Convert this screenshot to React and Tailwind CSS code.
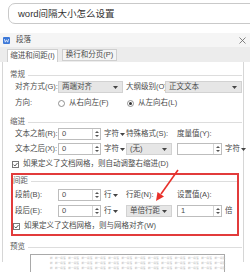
import React from "react";

function Caret() {
  return (
    <svg width="5" height="3" viewBox="0 0 5 3" className="shrink-0">
      <path d="M0 0h5L2.5 3z" fill="#444" />
    </svg>
  );
}

function Spin({ value = "", w }) {
  return (
    <div className={`flex h-[12px] shrink-0 items-stretch border border-[#bdbdbd] bg-white ${w}`}>
      <span className="flex flex-1 items-center pl-[3px]">{value}</span>
      <div className="flex w-[8px] flex-col items-center justify-center gap-[2px] border-l border-[#d6d6d6]">
        <svg width="4" height="2" viewBox="0 0 4 2">
          <path d="M0 2h4L2 0z" fill="#555" />
        </svg>
        <svg width="4" height="2" viewBox="0 0 4 2">
          <path d="M0 0h4L2 2z" fill="#555" />
        </svg>
      </div>
    </div>
  );
}

function Select({ value, w }) {
  return (
    <div className={`flex h-[12px] shrink-0 items-center justify-between border border-[#d2d2d2] bg-[#e6e6e6] pl-[3px] pr-[4px] ${w}`}>
      <span>{value}</span>
      <Caret />
    </div>
  );
}

function Unit({ text, caret = true }) {
  return (
    <div className="flex w-[25px] shrink-0 items-center gap-[1px] pl-[3px]">
      <span>{text}</span>
      {caret && <Caret />}
    </div>
  );
}

function Section({ title }) {
  return (
    <div className="flex h-[10px] items-center gap-[3px]">
      <span className="text-[#5a5a5a]">{title}</span>
      <div className="h-px flex-1 bg-[#dddddd]" />
    </div>
  );
}

function Check({ text }) {
  return (
    <div className="flex h-[10px] items-center gap-[4px] pl-[2px]">
      <svg width="7" height="7" viewBox="0 0 7 7">
        <rect x="0.5" y="0.5" width="6" height="6" fill="#fff" stroke="#777" />
        <path d="M1.5 3.6l1.4 1.4 2.6-3" fill="none" stroke="#444" strokeWidth="0.9" />
      </svg>
      <span>{text}</span>
    </div>
  );
}

function Radio({ text, checked, w }) {
  return (
    <div className={`flex items-center gap-[4px] ${w}`}>
      <svg width="7" height="7" viewBox="0 0 7 7">
        <circle cx="3.5" cy="3.5" r="3" fill="#fff" stroke="#777" strokeWidth="0.8" />
        {checked && <circle cx="3.5" cy="3.5" r="1.5" fill="#333" />}
      </svg>
      <span>{text}</span>
    </div>
  );
}

const groups = Array.from({ length: 13 });

export default function App() {
  return (
    <div className="relative h-[272px] w-[250px] overflow-hidden whitespace-nowrap bg-white font-['Liberation_Sans','Noto_Sans_CJK_SC',sans-serif] text-[7.5px] leading-none text-[#4a4a4a]">
      {/* search box */}
      <div className="pl-[8px] pt-[3px]">
        <div className="flex h-[21px] w-[262px] items-center rounded-[7px] border border-[#c9c9c9] pl-[9px] text-[9.5px] text-[#333]">
          word间隔大小怎么设置
        </div>
      </div>

      {/* dialog */}
      <div className="mt-[9px]">
        <div className="flex h-[14px] items-center bg-[#f5f5f5] pl-[3px] pr-[4px]">
          <svg width="7" height="7" viewBox="0 0 7 7">
            <rect width="7" height="7" rx="1" fill="#3c78d8" />
            <path d="M1.3 2l1 3.2 1.2-2.4 1.2 2.4 1-3.2" fill="none" stroke="#fff" strokeWidth="0.7" />
          </svg>
          <span className="ml-[6px] flex-1">段落</span>
          <svg width="7" height="7" viewBox="0 0 7 7">
            <path d="M0.5 0.5l6 6M6.5 0.5l-6 6" stroke="#666" strokeWidth="0.8" />
          </svg>
        </div>

        <div className="flex h-[15px] items-end gap-[4px] bg-[#ececec] pl-[7px]">
          <div className="flex h-[13px] w-[51px] items-center justify-center border border-b-0 border-[#cfcfcf] bg-white">
            缩进和间距(I)
          </div>
          <div className="mb-[1px] flex h-[12px] w-[55px] items-center justify-center border border-[#cfcfcf] bg-[#f4f4f4]">
            换行和分页(P)
          </div>
        </div>

        {/* panel */}
        <div className="ml-[2px] h-[200px] w-[242px] border-x border-[#d6d6d6] bg-white pl-[7px] pr-[1px] pt-[8px]">
          <Section title="常规" />
          <div className="ml-[5px] mt-[1px] flex items-center">
            <span className="w-[43px] shrink-0">对齐方式(G):</span>
            <Select value="两端对齐" w="w-[65px]" />
            <span className="ml-[3px] w-[39px] shrink-0">大纲级别(O):</span>
            <Select value="正文文本" w="w-[77px]" />
          </div>
          <div className="ml-[5px] mt-[4px] flex h-[12px] items-center">
            <span className="w-[43px] shrink-0">方向:</span>
            <Radio text="从右向左(F)" w="w-[69px]" />
            <Radio text="从左向右(L)" checked />
          </div>

          <div className="mt-[8px]">
            <Section title="缩进" />
          </div>
          <div className="ml-[5px] mt-[1px] flex h-[12px] items-center">
            <span className="w-[43px] shrink-0">文本之前(R):</span>
            <Spin value="0" w="w-[43px]" />
            <Unit text="字符" />
            <span className="w-[51px] shrink-0">特殊格式(S):</span>
            <span>度量值(Y):</span>
          </div>
          <div className="ml-[5px] mt-[3px] flex h-[12px] items-center">
            <span className="w-[43px] shrink-0">文本之后(X):</span>
            <Spin value="0" w="w-[43px]" />
            <Unit text="字符" />
            <Select value="(无)" w="w-[46px]" />
            <div className="ml-[5px]">
              <Spin w="w-[45px]" />
            </div>
            <Unit text="字符" />
          </div>
          <div className="mt-[4px]">
            <Check text="如果定义了文档网格，则自动调整右缩进(D)" />
          </div>

          {/* highlighted spacing box */}
          <div className="ml-[1px] mr-[3px] mt-[4px] border-2 border-[#e23b3b] pb-[3px] pt-[1px]">
            <Section title="间距" />
            <div className="ml-[2px] mt-[3px] flex h-[12px] items-center">
              <span className="w-[43px] shrink-0">段前(B):</span>
              <Spin value="0" w="w-[43px]" />
              <Unit text="行" />
              <span className="w-[51px] shrink-0">行距(N):</span>
              <span>设置值(A):</span>
            </div>
            <div className="ml-[2px] mt-[4px] flex h-[12px] items-center">
              <span className="w-[43px] shrink-0">段后(E):</span>
              <Spin value="0" w="w-[43px]" />
              <Unit text="行" />
              <Select value="单倍行距" w="w-[46px]" />
              <div className="ml-[5px]">
                <Spin value="1" w="w-[45px]" />
              </div>
              <Unit text="倍" caret={false} />
            </div>
            <div className="-ml-[2px] mt-[4px]">
              <Check text="如果定义了文档网格，则与网格对齐(W)" />
            </div>
          </div>

          <div className="mt-[6px]">
            <Section title="预览" />
          </div>
          <div className="ml-[20px] mt-[2px] h-[40px] w-[195px] border border-[#a9a9a9] bg-white pt-[3px]">
            {[0, 1, 2].map((r) => (
              <div key={r} className="mb-[2px] ml-[19px] flex h-[3px] items-center gap-[2.3px] text-[2.7px] text-[#b8b8b8]">
                <span>前</span>
                {groups.map((_, i) => (
                  <span key={i} className="w-[11px] shrink-0">前一段落</span>
                ))}
              </div>
            ))}
          </div>
        </div>
      </div>

      {/* red arrow */}
      <svg className="pointer-events-none absolute left-0 top-0" width="250" height="272" viewBox="0 0 250 272">
        <line x1="178" y1="170" x2="161" y2="194" stroke="#e8302a" strokeWidth="1.6" />
        <path d="M156 201 L164 196.6 L157.5 192 Z" fill="#e8302a" />
      </svg>
    </div>
  );
}
